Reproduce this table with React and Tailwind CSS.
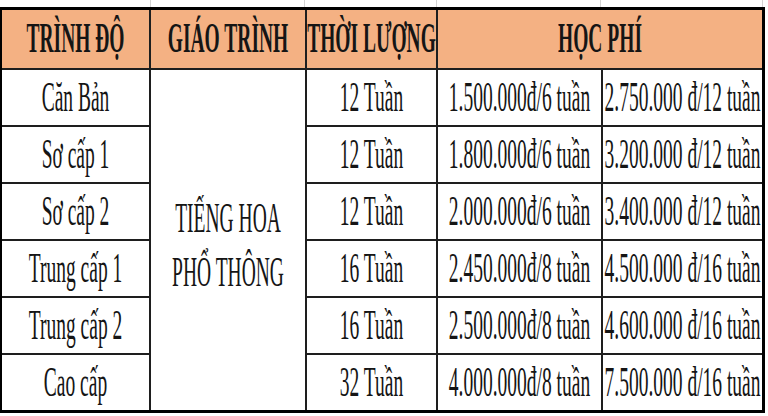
import React from "react";

const rows = [
  ["Căn Bản", "12 Tuần", "1.500.000đ/6 tuần", "2.750.000 đ/12 tuần"],
  ["Sơ cấp 1", "12 Tuần", "1.800.000đ/6 tuần", "3.200.000 đ/12 tuần"],
  ["Sơ cấp 2", "12 Tuần", "2.000.000đ/6 tuần", "3.400.000 đ/12 tuần"],
  ["Trung cấp 1", "16 Tuần", "2.450.000đ/8 tuần", "4.500.000 đ/16 tuần"],
  ["Trung cấp 2", "16 Tuần", "2.500.000đ/8 tuần", "4.600.000 đ/16 tuần"],
  ["Cao cấp", "32 Tuần", "4.000.000đ/8 tuần", "7.500.000 đ/16 tuần"],
];

function T({ children, bold }) {
  return (
    <span
      className={
        "inline-block whitespace-nowrap text-[19.5px] leading-none scale-y-[2.15] text-[#151515] " +
        (bold ? "font-bold" : "font-normal")
      }
    >
      {children}
    </span>
  );
}

function Cell({ children, className = "" }) {
  return (
    <div className={"bg-white flex items-center justify-center overflow-visible " + className}>
      {children}
    </div>
  );
}

function Head({ children, className = "" }) {
  return (
    <div className={"bg-[#f4b183] flex items-center justify-center " + className}>
      <T bold>{children}</T>
    </div>
  );
}

export default function App() {
  return (
    <div className="w-[768px] h-[416px] bg-white overflow-hidden font-['Liberation_Serif','Times_New_Roman',serif]">
      <div className="h-[7px] grid grid-cols-[151px_154px_132px_164px_162px]">
        <div className="border-r border-[#d4d4d4]" />
        <div className="border-r border-[#d4d4d4]" />
        <div className="border-r border-[#d4d4d4]" />
        <div className="border-r border-[#d4d4d4]" />
        <div className="border-r border-[#d4d4d4]" />
      </div>
      <div className="w-[765px] grid grid-cols-[147px_154px_129px_163px_159px] grid-rows-[58px_repeat(6,55px)] gap-[2px] bg-[#1e1e1e] border-t-[3px] border-r-[3px] border-b-[3px] border-l-2 border-black">
        <Head>TRÌNH ĐỘ</Head>
        <Head>GIÁO TRÌNH</Head>
        <Head>THỜI LƯỢNG</Head>
        <Head className="col-span-2">HỌC PHÍ</Head>

        {rows.map((r, i) => (
          <React.Fragment key={i}>
            <Cell>
              <T>{r[0]}</T>
            </Cell>
            {i === 0 && (
              <Cell className="row-span-6 pt-[10px]">
                <div className="flex flex-col items-center text-[19.5px] leading-[25px] scale-y-[2.15] text-[#151515] whitespace-nowrap">
                  <span>TIẾNG HOA</span>
                  <span>PHỔ THÔNG</span>
                </div>
              </Cell>
            )}
            <Cell>
              <T>{r[1]}</T>
            </Cell>
            <Cell>
              <T>{r[2]}</T>
            </Cell>
            <Cell>
              <T>{r[3]}</T>
            </Cell>
          </React.Fragment>
        ))}
      </div>
    </div>
  );
}
